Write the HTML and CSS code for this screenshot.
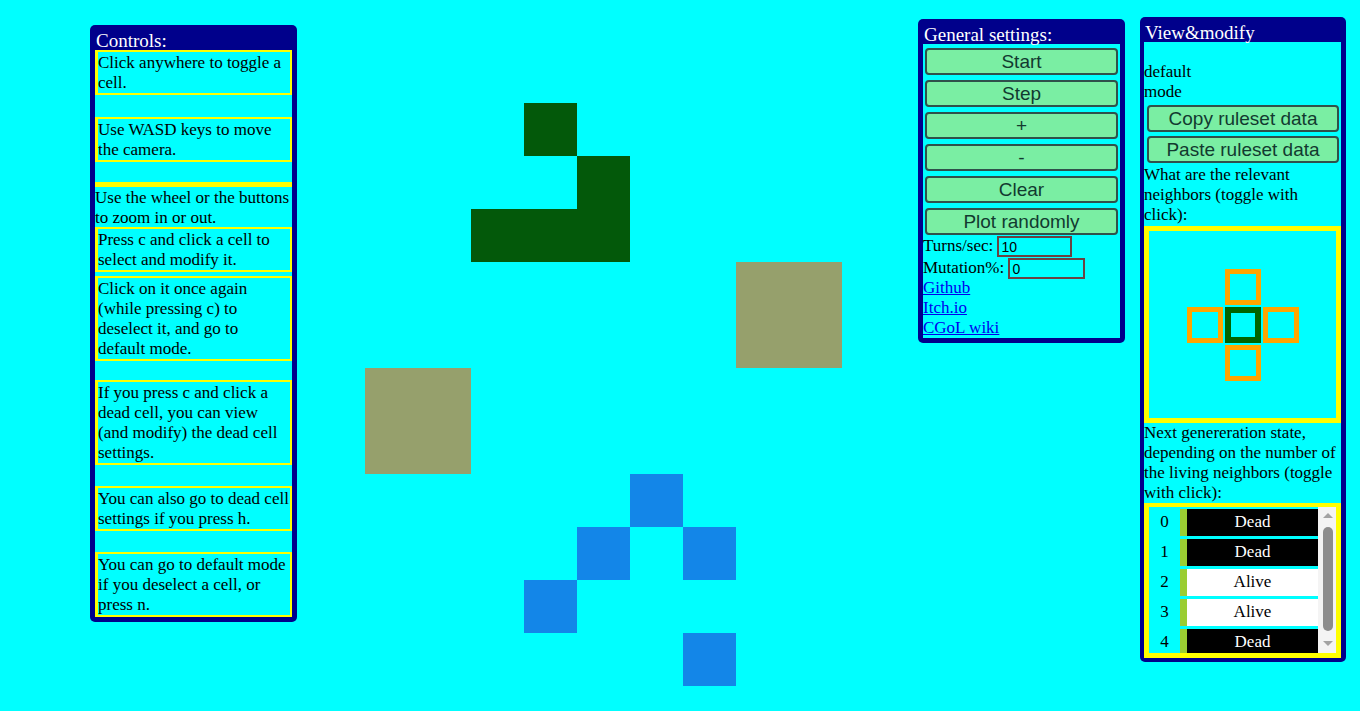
FILE: index.html
```html
<!DOCTYPE html>
<html lang="en">
<head>
<meta charset="utf-8">
<title>Game of Life</title>
<link rel="stylesheet" href="styles.css">
</head>
<body>
<div class="world">
  <div class="cell alive" style="left:524px;top:103px"></div>
  <div class="cell alive" style="left:577px;top:156px"></div>
  <div class="cell alive" style="left:471px;top:209px"></div>
  <div class="cell alive" style="left:524px;top:209px"></div>
  <div class="cell alive" style="left:577px;top:209px"></div>
  <div class="cell big olive" style="left:736px;top:262px"></div>
  <div class="cell big olive" style="left:365px;top:368px"></div>
  <div class="cell blue" style="left:630px;top:474px"></div>
  <div class="cell blue" style="left:577px;top:527px"></div>
  <div class="cell blue" style="left:683px;top:527px"></div>
  <div class="cell blue" style="left:524px;top:580px"></div>
  <div class="cell blue" style="left:683px;top:633px"></div>

  <div class="panel controls">
    <div class="title">Controls:</div>
    <div class="body">
      <div class="tip gap22">Click anywhere to toggle a<br>cell.</div>
      <div class="tip gap20">Use WASD keys to move<br>the camera.</div>
      <div class="plain">Use the wheel or the buttons<br>to zoom in or out.</div>
      <div class="tip gap4">Press c and click a cell to<br>select and modify it.</div>
      <div class="tip gap19">Click on it once again<br>(while pressing c) to<br>deselect it, and go to<br>default mode.</div>
      <div class="tip gap21">If you press c and click a<br>dead cell, you can view<br>(and modify) the dead cell<br>settings.</div>
      <div class="tip gap21">You can also go to dead cell<br>settings if you press h.</div>
      <div class="tip">You can go to default mode<br>if you deselect a cell, or<br>press n.</div>
    </div>
  </div>

  <div class="panel general">
    <div class="title">General settings:</div>
    <div class="body gbody">
      <button class="btn">Start</button>
      <button class="btn">Step</button>
      <button class="btn">+</button>
      <button class="btn">-</button>
      <button class="btn">Clear</button>
      <button class="btn last">Plot randomly</button>
      <div class="field f1">Turns/sec: <input class="num-input w75" type="text" value="10"></div>
      <div class="field f2">Mutation%: <input class="num-input w77" type="text" value="0"></div>
      <div class="links">
        <a href="#">Github</a>
        <a href="#">Itch.io</a>
        <a href="#">CGoL wiki</a>
      </div>
    </div>
  </div>

  <div class="panel view">
    <div class="title">View&amp;modify</div>
    <div class="body vbody">
      <div class="mode">default<br>mode</div>
      <button class="btn wide first">Copy ruleset data</button>
      <button class="btn wide second">Paste ruleset data</button>
      <div class="question q1">What are the relevant neighbors (toggle with click):</div>
      <div class="nbox">
        <div class="ngrid">
          <div class="n empty"></div>
          <div class="n on"></div>
          <div class="n empty"></div>
          <div class="n on"></div>
          <div class="n self"></div>
          <div class="n on"></div>
          <div class="n empty"></div>
          <div class="n on"></div>
          <div class="n empty"></div>
        </div>
      </div>
      <div class="question q2">Next genereration state, depending on the number of the living neighbors (toggle with click):</div>
      <div class="states">
        <div class="list">
          <div class="row"><span class="idx">0</span><span class="bar"></span><span class="val dead">Dead</span></div>
          <div class="row"><span class="idx">1</span><span class="bar"></span><span class="val dead">Dead</span></div>
          <div class="row"><span class="idx">2</span><span class="bar"></span><span class="val live">Alive</span></div>
          <div class="row"><span class="idx">3</span><span class="bar"></span><span class="val live">Alive</span></div>
          <div class="row"><span class="idx">4</span><span class="bar"></span><span class="val dead">Dead</span></div>
        </div>
        <div class="scrollbar">
          <span class="arrow up"></span>
          <span class="thumb"></span>
          <span class="arrow down"></span>
        </div>
      </div>
    </div>
  </div>
</div>
</body>
</html>
```
FILE: styles.css
```css
* { box-sizing: border-box; }
html, body { margin: 0; padding: 0; }
body {
  background: #00ffff;
  font-family: "Liberation Serif", "Times New Roman", serif;
  font-size: 17px;
  line-height: 20px;
  color: #000;
  overflow: hidden;
}
.world { position: relative; width: 1360px; height: 711px; }

/* canvas cells */
.cell { position: absolute; width: 53px; height: 53px; }
.cell.big { width: 106px; height: 106px; }
.alive { background: #03590a; }
.olive { background: #96a06c; }
.blue { background: #1386e8; }

/* panels */
.panel {
  position: absolute;
  background: #00008b;
  border-radius: 5px;
}
.title {
  color: #fff;
  font-size: 19px;
  line-height: 19px;
  height: 25px;
  padding-top: 6px;
  padding-left: 1px;
  white-space: nowrap;
}
.body { background: #00ffff; }

.controls { left: 90px; top: 25px; width: 207px; padding: 0 5px 5px 5px; }
.tip {
  border: 3px solid #ffff00;
  border-top-width: 2px;
  border-right-width: 2px;
  border-bottom-width: 2px;
  padding-top: 1px;
  white-space: nowrap;
}
.plain { border-top: 5px solid #ffff00; padding-top: 1px; height: 45px; white-space: nowrap; }
.gap22 { margin-bottom: 22px; }
.gap21 { margin-bottom: 21px; }
.gap20 { margin-bottom: 20px; }
.gap19 { margin-bottom: 19px; }
.gap4 { margin-bottom: 4px; }

/* general settings */
.general { left: 918px; top: 19px; width: 207px; padding: 0 5px 5px 5px; }
.gbody { padding-top: 4px; }
.btn {
  display: block;
  width: 193px;
  height: 27px;
  margin: 0 0 5px 2px;
  padding: 0;
  background: #7aeea3;
  border: 2px solid #2f514b;
  border-radius: 4px;
  font-family: "Liberation Sans", Arial, sans-serif;
  font-size: 19px;
  line-height: 21px;
  color: #123a30;
  text-align: center;
}
.btn.last { margin-bottom: 0; }
.field { white-space: nowrap; line-height: 22px; }
.f1 { height: 22px; }
.f2 { height: 21px; line-height: 21px; }
.num-input {
  vertical-align: top;
  margin: 1px 0 0 0;
  height: 21px;
  padding: 0 0 0 2px;
  background: transparent;
  border: 2px solid #6a4242;
  font-family: "Liberation Sans", Arial, sans-serif;
  font-size: 14px;
  color: #000;
}
.w75 { width: 75px; }
.w77 { width: 77px; }
.links a {
  display: block;
  color: #0000ee;
  text-decoration: underline;
  line-height: 20px;
  width: max-content;
}

/* view & modify */
.view { left: 1140px; top: 17px; width: 206px; padding: 0 5px 4px 4px; }
.mode { padding-top: 20px; }
.btn.wide { width: 192px; margin-left: 3px; margin-bottom: 0; }
.btn.first { margin-top: 3px; }
.btn.second { margin-top: 4px; }
.q1 { margin-top: 2px; }
.nbox {
  margin-top: 1px;
  height: 197px;
  border: 5px solid #ffff00;
  display: flex;
  align-items: center;
  justify-content: center;
}
.ngrid {
  display: grid;
  grid-template-columns: repeat(3, 36px);
  grid-template-rows: repeat(3, 36px);
  gap: 2px;
}
.n.on { border: 5px solid #ffa500; }
.n.self { border: 6px solid #006400; }

.states {
  height: 155px;
  border: 5px solid #ffff00;
  border-top-width: 4px;
  display: flex;
}
.list {
  width: 169px;
  height: 146px;
  overflow: hidden;
  padding-top: 2px;
}
.row { display: flex; height: 27px; margin-bottom: 3px; line-height: 26px; }
.idx { width: 31px; text-align: center; }
.bar { width: 7px; background: #9acd32; }
.val { flex: 1; text-align: center; }
.val.dead { background: #000; color: #fff; }
.val.live { background: #fff; color: #000; }

.scrollbar {
  position: relative;
  width: 18px;
  height: 146px;
  background: #f4f4f4;
}
.thumb {
  position: absolute;
  left: 5px;
  top: 20px;
  width: 10px;
  height: 104px;
  border-radius: 5px;
  background: #8d8d8d;
}
.arrow {
  position: absolute;
  left: 5px;
  width: 0;
  height: 0;
  border-left: 5px solid transparent;
  border-right: 5px solid transparent;
}
.arrow.up { top: 6px; border-bottom: 5px solid #a3a3a3; }
.arrow.down { top: 134px; border-top: 5px solid #a3a3a3; }
```
